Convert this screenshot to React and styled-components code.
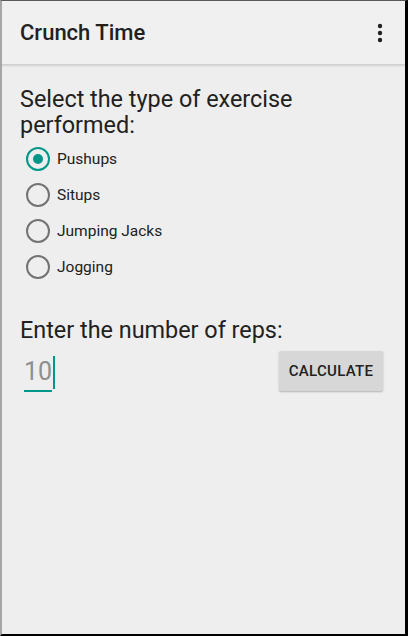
import React, { useState } from "react";
import styled, { createGlobalStyle } from "styled-components";

const Global = createGlobalStyle`
  html, body { margin: 0; padding: 0; background: #000; }
  body { font-family: Roboto, "Noto Sans", sans-serif; }
  #root { width: 408px; height: 636px; }
`;

const Frame = styled.div`
  box-sizing: border-box;
  width: 408px;
  height: 636px;
  border-top: 1px solid #5a5a5a;
  border-left: 2px solid #a6a6a6;
  border-right: 3px solid #000;
  border-bottom: 2px solid #000;
  background: #eeeeee;
  display: flex;
  flex-direction: column;
  overflow: hidden;
`;

const AppBar = styled.header`
  height: 63px;
  flex: none;
  background: #f0f0f0;
  display: flex;
  align-items: center;
  justify-content: space-between;
  padding: 0 13px 0 18px;
  box-shadow: 0 1px 0 #cfcfcf, 0 2px 2px rgba(0, 0, 0, 0.12);
  position: relative;
  z-index: 1;
`;

const Title = styled.h1`
  margin: 0;
  font-size: 22px;
  font-weight: 500;
  color: #212121;
  letter-spacing: 0;
`;

const MenuButton = styled.button`
  border: 0;
  background: none;
  padding: 0;
  width: 24px;
  height: 24px;
  display: flex;
  align-items: center;
  justify-content: center;
`;

const Content = styled.main`
  padding: 22px 18px 0 18px;
  display: flex;
  flex-direction: column;
`;

const Heading = styled.p`
  margin: 0;
  font-size: 23.4px;
  line-height: 26px;
  color: #212121;
`;

const RadioGroup = styled.div`
  display: flex;
  flex-direction: column;
  margin-top: 3px;
  margin-left: 6px;
`;

const RadioRow = styled.label`
  display: flex;
  align-items: center;
  height: 36px;
  gap: 7px;
  cursor: pointer;
`;

const RadioCircle = styled.span`
  box-sizing: border-box;
  flex: none;
  width: 24px;
  height: 24px;
  border-radius: 50%;
  border: 2px solid ${(p) => (p.$checked ? "#009688" : "#737373")};
  display: flex;
  align-items: center;
  justify-content: center;
  &::after {
    content: "";
    width: 10px;
    height: 10px;
    border-radius: 50%;
    background: #009688;
    display: ${(p) => (p.$checked ? "block" : "none")};
  }
`;

const RadioLabel = styled.span`
  font-size: 15.5px;
  color: #212121;
`;

const SecondHeading = styled(Heading)`
  margin-top: 32px;
`;

const InputRow = styled.div`
  display: flex;
  align-items: flex-start;
  justify-content: space-between;
  margin-top: 4px;
`;

const Field = styled.div`
  margin-left: 4px;
  margin-top: 8px;
  display: flex;
  flex-direction: column;
  width: 32px;
`;

const FieldText = styled.div`
  display: flex;
  align-items: center;
  height: 34px;
  font-size: 25px;
  color: #8e8e8e;
  line-height: 34px;
`;

const Caret = styled.span`
  display: inline-block;
  flex: none;
  width: 2px;
  height: 33px;
  background: #009688;
  margin-left: 1px;
`;

const Underline = styled.div`
  height: 2px;
  width: 28px;
  background: #009688;
  margin-top: 1px;
`;

const Button = styled.button`
  margin-top: 4px;
  margin-right: 4px;
  width: 104px;
  height: 40px;
  border: 0;
  border-radius: 2px;
  background: #d7d7d7;
  box-shadow: 0 1px 2px rgba(0, 0, 0, 0.25);
  font-family: Roboto, sans-serif;
  font-size: 15px;
  font-weight: 500;
  color: #212121;
  letter-spacing: 0.3px;
  text-transform: uppercase;
  padding: 0;
`;

const options = ["Pushups", "Situps", "Jumping Jacks", "Jogging"];

export default function App() {
  const [sel, setSel] = useState(0);
  return (
    <>
      <Global />
      <Frame>
        <AppBar>
          <Title>Crunch Time</Title>
          <MenuButton aria-label="More options">
            <svg width="6" height="20" viewBox="0 0 6 20">
              <circle cx="3" cy="3" r="2.2" fill="#212121" />
              <circle cx="3" cy="10" r="2.2" fill="#212121" />
              <circle cx="3" cy="17" r="2.2" fill="#212121" />
            </svg>
          </MenuButton>
        </AppBar>
        <Content>
          <Heading>Select the type of exercise performed:</Heading>
          <RadioGroup>
            {options.map((o, i) => (
              <RadioRow key={o} onClick={() => setSel(i)}>
                <RadioCircle $checked={sel === i} />
                <RadioLabel>{o}</RadioLabel>
              </RadioRow>
            ))}
          </RadioGroup>
          <SecondHeading>Enter the number of reps:</SecondHeading>
          <InputRow>
            <Field>
              <FieldText>
                10
                <Caret />
              </FieldText>
              <Underline />
            </Field>
            <Button>Calculate</Button>
          </InputRow>
        </Content>
      </Frame>
    </>
  );
}
